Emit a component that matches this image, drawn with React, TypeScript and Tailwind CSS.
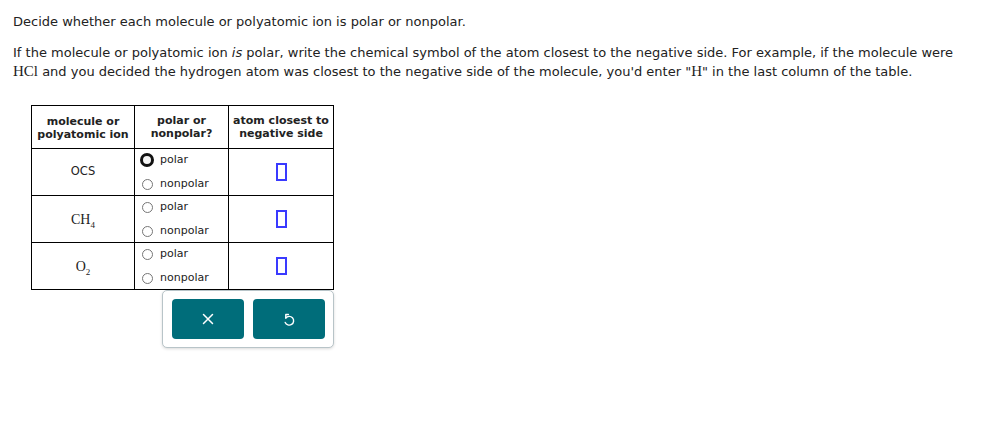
import React from 'react';

const rows = [
  { id: 'ocs', label: <span className="font-['DejaVu_Sans',sans-serif] text-[11.5px]">OCS</span>, focused: true },
  {
    id: 'ch4',
    label: (
      <span className="font-['Liberation_Serif',serif] text-[14px]">
        CH<sub className="text-[9px] relative top-[4px]">4</sub>
      </span>
    ),
    focused: false,
  },
  {
    id: 'o2',
    label: (
      <span className="font-['Liberation_Serif',serif] text-[14px]">
        O<sub className="text-[9px] relative top-[4px]">2</sub>
      </span>
    ),
    focused: false,
  },
];

function Radio({ focused }: { focused?: boolean }) {
  if (focused) {
    return <span className="inline-block w-[14px] h-[14px] rounded-full border-[3px] border-[#111] bg-[#f4f4f4] box-border" />;
  }
  return (
    <span className="inline-flex w-[14px] h-[14px] items-center justify-center">
      <span className="inline-block w-[11px] h-[11px] rounded-full border border-[#767676] bg-white box-border" />
    </span>
  );
}

export default function App() {
  return (
    <div className="w-[1002px] h-[427px] bg-white text-[#222] font-['DejaVu_Sans',Verdana,sans-serif] text-[13px] pl-[13px] pt-[12px]">
      <p className="leading-[19px]">Decide whether each molecule or polyatomic ion is polar or nonpolar.</p>
      <p className="leading-[19px] mt-[12px] pr-[30px]">
        If the molecule or polyatomic ion <i>is</i> polar, write the chemical symbol of the atom closest to the negative side. For example, if the molecule were{' '}
        <span className="font-['Liberation_Serif',serif] text-[15px]">HCl</span> and you decided the hydrogen atom was closest to the negative side of the molecule, you'd enter "
        <span className="font-['Liberation_Serif',serif] text-[15px]">H</span>" in the last column of the table.
      </p>

      <div className="ml-[18px] mt-[24px] w-[303px]">
        <table className="border-collapse border border-black text-[11px]">
          <thead>
            <tr className="h-[43px]">
              <th className="w-[103px] border border-black font-bold leading-[13px] align-middle pt-[1px]">
                molecule or
                <br />
                polyatomic ion
              </th>
              <th className="w-[94px] border border-black font-bold leading-[13px]">
                polar or
                <br />
                nonpolar?
              </th>
              <th className="w-[105px] border border-black font-bold leading-[13px]">
                atom closest to
                <br />
                negative side
              </th>
            </tr>
          </thead>
          <tbody>
            {rows.map((r) => (
              <tr key={r.id} className="h-[47px]">
                <td className="border border-black text-center align-middle">{r.label}</td>
                <td className="border border-black px-[5px] align-middle">
                  <div className="flex flex-col gap-[10px] text-[11px]">
                    <label className="flex items-center gap-[6px] h-[14px]">
                      <Radio focused={r.focused} />
                      <span>polar</span>
                    </label>
                    <label className="flex items-center gap-[6px] h-[14px]">
                      <Radio />
                      <span>nonpolar</span>
                    </label>
                  </div>
                </td>
                <td className="border border-black align-middle">
                  <div className="flex justify-center pl-[1px]">
                    <span className="block w-[11px] h-[18px] border-2 border-[#3a3aff] bg-white" />
                  </div>
                </td>
              </tr>
            ))}
          </tbody>
        </table>

        <div className="ml-[131px] w-[172px] h-[58px] rounded-[5px] border border-[#b8c4c8] shadow-[0_1px_3px_rgba(0,0,0,0.15)] flex items-center justify-center gap-[9px] bg-white">
          <button className="w-[72px] h-[40px] rounded-[4px] bg-[#006d7a] flex items-center justify-center">
            <svg width="12" height="12" viewBox="0 0 12 12" fill="none" stroke="white" strokeWidth="1.5" strokeLinecap="round">
              <path d="M1.5 1.5 L10.5 10.5 M10.5 1.5 L1.5 10.5" />
            </svg>
          </button>
          <button className="w-[72px] h-[40px] rounded-[4px] bg-[#006d7a] flex items-center justify-center">
            <svg width="14" height="15" viewBox="0 0 24 24" fill="none" stroke="white" strokeWidth="2.4" strokeLinecap="round" strokeLinejoin="round">
              <path d="M6.5 9.5 A7.5 7.5 0 1 1 5.5 17" />
              <path d="M11 3.5 H6.5 V9.5" />
            </svg>
          </button>
        </div>
      </div>
    </div>
  );
}
